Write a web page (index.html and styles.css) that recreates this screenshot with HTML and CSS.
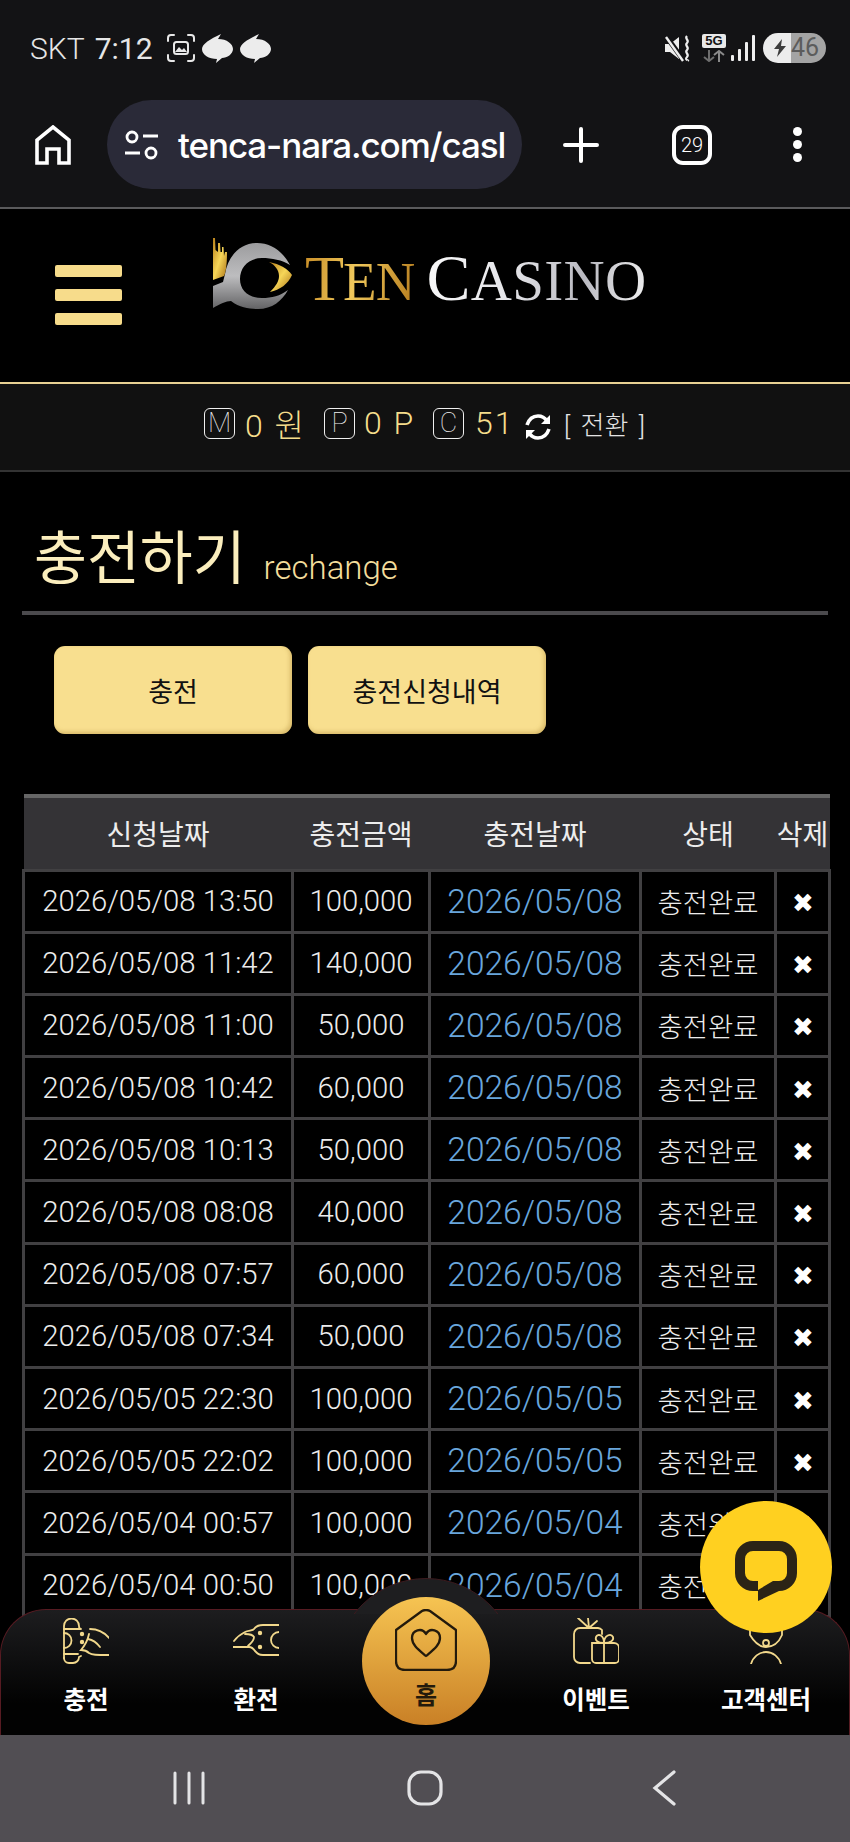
FILE: index.html
```html
<!DOCTYPE html>
<html lang="ko">
<head>
<meta charset="utf-8">
<title>TEN CASINO - 충전하기</title>
<link rel="stylesheet" href="styles.css">
</head>
<body>
<div class="screen">
  <div class="chrome">
    <div class="status">
      <div class="status-left">
        <span class="carrier">SKT</span><span class="clock">7:12</span>
        <svg class="ic-shot" viewBox="0 0 28 28" fill="none" stroke="#e8e8e8" stroke-width="2" stroke-linecap="round"><path d="M1 7V4a3 3 0 0 1 3-3h3M21 1h3a3 3 0 0 1 3 3v3M27 21v3a3 3 0 0 1-3 3h-3M7 27H4a3 3 0 0 1-3-3v-3"/><rect x="7" y="8" width="14" height="12" rx="2.5"/><path d="M8 18l4-5 3 3 2-2 3 4z" fill="#e8e8e8" stroke="none"/></svg>
        <svg class="ic-blob" viewBox="0 0 31 29"><path d="M19 0L16 5C25 5 31 10 31 15C31 20 25 24 20 24L14 29L15 25C7 25 0 21 0 15C0 10 8 5 19 0Z" fill="#ececec"/></svg>
        <svg class="ic-blob" viewBox="0 0 31 29"><path d="M19 0L16 5C25 5 31 10 31 15C31 20 25 24 20 24L14 29L15 25C7 25 0 21 0 15C0 10 8 5 19 0Z" fill="#ececec"/></svg>
      </div>
      <div class="status-right">
        <svg class="ic-mute" viewBox="0 0 27 27"><path d="M0 9h5l9-7v22l-9-7H0z" fill="#eee"/><path d="M1 1l18 25" stroke="#131315" stroke-width="5"/><path d="M1 2l17 24" stroke="#eee" stroke-width="2.4"/><path d="M22 1c-3 3 3 4 0 7s3 4 0 7 3 4 0 7 2 3 1 4" fill="none" stroke="#eee" stroke-width="2.2"/></svg>
        <div class="net"><span class="net-5g">5G</span><svg class="ic-arrows" viewBox="0 0 24 12" fill="none" stroke="#6e6e6e" stroke-width="2"><path d="M7 0v11M2 7l5 4 5-4"/><path d="M17 12V1M12 5l5-4 5 4" stroke="#8a8a8a"/></svg></div>
        <svg class="ic-signal" viewBox="0 0 24 26" fill="#eee"><rect x="0" y="20" width="3" height="6" rx="1"/><rect x="7" y="14" width="3" height="12" rx="1"/><rect x="14" y="7" width="3" height="19" rx="1"/><rect x="21" y="0" width="3" height="26" rx="1"/></svg>
        <div class="battery"><span class="bat-fill"><svg class="ic-bolt" viewBox="0 0 14 18"><path d="M9 0L1 10h5l-2 8 9-11H8z" fill="#3c3c3c"/></svg></span><span class="bat-rest">46</span></div>
      </div>
    </div>
    <div class="browser">
      <svg class="ic-home" viewBox="0 0 36 40" fill="none" stroke="#fff" stroke-width="3.6"><path d="M2 38V15L18 2l16 13v23H24V24H12v14z"/></svg>
      <div class="urlbar">
        <svg class="ic-tune" viewBox="0 0 33 30" fill="none" stroke="#fff" stroke-width="2.8"><circle cx="7" cy="7" r="5"/><path d="M18 6h15M0 23h15"/><circle cx="26" cy="23" r="5"/></svg>
        <span class="url">tenca-nara.com/casl</span>
      </div>
      <svg class="ic-plus" viewBox="0 0 36 36" stroke="#fff" stroke-width="4" stroke-linecap="round"><path d="M18 2v32M2 18h32"/></svg>
      <span class="tabs">29</span>
      <div class="dots"><i></i><i></i><i></i></div>
    </div>
  </div>

  <div class="page">
    <header class="site-head">
      <div class="burger"><i></i><i></i><i></i></div>
      <div class="logo">
        <svg class="logo-mark" viewBox="0 0 82 72">
          <defs>
            <linearGradient id="lgGold" x1="0" y1="0" x2="1" y2="1"><stop offset="0" stop-color="#b8801a"/><stop offset=".5" stop-color="#f6d658"/><stop offset="1" stop-color="#a86f14"/></linearGradient>
            <linearGradient id="lgGray" x1="0" y1="0" x2="0" y2="1"><stop offset="0" stop-color="#9c9c9e"/><stop offset=".5" stop-color="#bdbdbf"/><stop offset="1" stop-color="#636365"/></linearGradient>
          </defs>
          <path d="M78 27C70 12 58 5 45 5C28 5 16 18 13 36L11 44L1 48L1 70C8 66 14 63 19 63C28 70 38 71 46 71C60 71 70 63 76 52C68 58 60 60 50 60C36 60 28 52 28 41C28 29 37 20 50 20C60 20 70 22 78 27Z" fill="url(#lgGray)"/>
          <path d="M1 42L1 0L3 0L3.5 12L6 14L6 5L8 5L8.5 14L10 14L10 9L11.500 9L12 18L13 14L15 14C15 26 14 34 12 38Z" fill="url(#lgGold)"/>
          <path d="M57 24C68 26 76 31 80 37C76 46 68 52 58 54C64 48 67 43 67 38C67 32 63 27 57 24Z" fill="url(#lgGold)"/>
        </svg>
        <div class="logo-text"><span class="word-gold"><span class="cap">T</span>EN</span><span class="word-silver"><span class="cap">C</span>ASINO</span></div>
      </div>
    </header>

    <div class="wallet">
      <span class="badge">M</span><span class="amt amt-m">0 원</span>
      <span class="badge">P</span><span class="amt amt-p">0 P</span>
      <span class="badge">C</span><span class="amt amt-c">51</span>
      <svg class="ic-refresh" viewBox="0 0 28 26" fill="none" stroke="#fff" stroke-width="3.6"><path d="M3 11C5 5 9 2 14 2c4 0 7 2 9 5"/><path d="M25 15c-2 6-6 9-11 9-4 0-7-2-9-5"/><path d="M26 1v9h-9z" fill="#fff" stroke="none"/><path d="M2 25v-9h9z" fill="#fff" stroke="none"/></svg>
      <span class="swap">[ 전환 ]</span>
    </div>

    <main class="content">
      <div class="title-row">
        <h1 class="title">충전하기</h1><span class="subtitle">rechange</span>
      </div>
      <div class="tab-btns">
        <button class="tab-btn">충전</button>
        <button class="tab-btn">충전신청내역</button>
      </div>
      <table class="history">
        <colgroup><col class="c1"><col class="c2"><col class="c3"><col class="c4"><col class="c5"></colgroup>
        <thead>
          <tr><th>신청날짜</th><th>충전금액</th><th>충전날짜</th><th>상태</th><th>삭제</th></tr>
        </thead>
        <tbody>
          <tr><td>2026/05/08 13:50</td><td>100,000</td><td class="link">2026/05/08</td><td class="state">충전완료</td><td class="del">✖</td></tr>
          <tr><td>2026/05/08 11:42</td><td>140,000</td><td class="link">2026/05/08</td><td class="state">충전완료</td><td class="del">✖</td></tr>
          <tr><td>2026/05/08 11:00</td><td>50,000</td><td class="link">2026/05/08</td><td class="state">충전완료</td><td class="del">✖</td></tr>
          <tr><td>2026/05/08 10:42</td><td>60,000</td><td class="link">2026/05/08</td><td class="state">충전완료</td><td class="del">✖</td></tr>
          <tr><td>2026/05/08 10:13</td><td>50,000</td><td class="link">2026/05/08</td><td class="state">충전완료</td><td class="del">✖</td></tr>
          <tr><td>2026/05/08 08:08</td><td>40,000</td><td class="link">2026/05/08</td><td class="state">충전완료</td><td class="del">✖</td></tr>
          <tr><td>2026/05/08 07:57</td><td>60,000</td><td class="link">2026/05/08</td><td class="state">충전완료</td><td class="del">✖</td></tr>
          <tr><td>2026/05/08 07:34</td><td>50,000</td><td class="link">2026/05/08</td><td class="state">충전완료</td><td class="del">✖</td></tr>
          <tr><td>2026/05/05 22:30</td><td>100,000</td><td class="link">2026/05/05</td><td class="state">충전완료</td><td class="del">✖</td></tr>
          <tr><td>2026/05/05 22:02</td><td>100,000</td><td class="link">2026/05/05</td><td class="state">충전완료</td><td class="del">✖</td></tr>
          <tr><td>2026/05/04 00:57</td><td>100,000</td><td class="link">2026/05/04</td><td class="state">충전완료</td><td class="del">✖</td></tr>
          <tr><td>2026/05/04 00:50</td><td>100,000</td><td class="link">2026/05/04</td><td class="state">충전완료</td><td class="del">✖</td></tr>
        </tbody>
      </table>
    </main>

    <nav class="dock">
      <a class="dock-item">
        <svg class="dock-ic" viewBox="0 0 46 46" fill="none" stroke="#f2d88c" stroke-width="1.8" stroke-linecap="round"><path d="M1 40V8a7.500 7.500 0 0 1 15 0c0 2 1 3 2 3"/><path d="M1 40a5 5 0 0 0 5 5h4a6 6 0 0 0 6-6l2-1"/><path d="M1 15a7.500 7.500 0 0 1 0 15"/><path d="M1 11h16M1 36h14"/><path d="M27 11c8 0 14 3 19 9"/><path d="M26 16c-1 5-3 10-8 16 3 0 6 1 8 3 3 2 7 2 20 2"/><path d="M25 21c5 1 9 4 12 8"/><circle cx="19" cy="16" r="1.300" fill="#f2d88c"/><circle cx="19" cy="24" r="1.300" fill="#f2d88c"/></svg>
        <span>충전</span>
      </a>
      <a class="dock-item">
        <svg class="dock-ic" viewBox="0 0 46 46" fill="none" stroke="#f2d88c" stroke-width="1.8" stroke-linecap="round"><path d="M46 7H30c-5 0-7 1-9 4-1 2-6 1-9 3-4 2-8 5-11 9"/><path d="M46 37H30c-4 0-5-1-8-4-2-3-3-4-6-4H0"/><path d="M12 16c5 0 8 1 9 3 0 4-3 6-6 9"/><path d="M46 14a8 8 0 0 0 0 16"/><circle cx="27" cy="15" r="1.300" fill="#f2d88c"/><circle cx="27" cy="29" r="1.300" fill="#f2d88c"/></svg>
        <span>환전</span>
      </a>
      <a class="dock-home">
        <svg class="home-ic" viewBox="0 0 62 62" fill="none" stroke="#231a0c" stroke-width="2.300" stroke-linejoin="round"><path d="M1 21L27 2q4-2 8 0l26 19v31q0 9-9 9H10q-9 0-9-9z"/><path d="M31 47C24 41 17 36 17 29c0-8 10-11 14-4 4-7 14-4 14 4 0 7-7 12-14 18z"/></svg>
        <span>홈</span>
      </a>
      <a class="dock-item">
        <svg class="dock-ic" viewBox="0 0 46 46" fill="none" stroke="#f2d88c" stroke-width="1.800" stroke-linecap="round"><path d="M17 45H7a6 6 0 0 1-6-6V16a6 6 0 0 1 6-6h18a6 6 0 0 1 4 2v4"/><path d="M16 10L5 0M16 10L15 0M16 10L24 3"/><path d="M19 25h22a5 5 0 0 1 5 5v11a4 4 0 0 1-4 4H23a4 4 0 0 1-4-4z"/><path d="M31 25v20"/><path d="M31 25c-7 0-9-3-8-6 2-4 8-2 8 6 0-8 7-10 9-6 1 3-2 6-9 6z"/></svg>
        <span>이벤트</span>
      </a>
      <a class="dock-item">
        <svg class="dock-ic" viewBox="0 0 46 46" fill="none" stroke="#f2d88c" stroke-width="1.800" stroke-linecap="round"><path d="M7 7v10c3 5 9 12 16 12 8 0 13-5 16-12V7"/><circle cx="23" cy="25" r="3"/><path d="M8 46c2-7 8-12 15-12s13 5 15 12"/></svg>
        <span>고객센터</span>
      </a>
    </nav>

    <a class="talk">
      <svg class="talk-ic" viewBox="0 0 62 60"><path d="M18 0h26a18 18 0 0 1 18 18v14a18 18 0 0 1-18 18H44L23 60V50H18A18 18 0 0 1 0 32V18A18 18 0 0 1 18 0z" fill="#2b2416"/><path d="M18 10h26a8 8 0 0 1 8 8v14a8 8 0 0 1-8 8h-6l-15 9V40H18a8 8 0 0 1-8-8V18a8 8 0 0 1 8-8z" fill="#ffd020"/></svg>
    </a>
  </div>

  <div class="sysnav">
    <svg class="ic-recents" viewBox="0 0 34 34" stroke="#e4e4e6" stroke-width="3" stroke-linecap="round"><path d="M3 2v30M17 2v30M31 2v30"/></svg>
    <svg class="ic-circle" viewBox="0 0 36 36" fill="none" stroke="#e4e4e6" stroke-width="3.200"><rect x="2" y="2" width="32" height="32" rx="12"/></svg>
    <svg class="ic-back" viewBox="0 0 24 36" fill="none" stroke="#e4e4e6" stroke-width="3.200" stroke-linecap="round"><path d="M22 2L3 18l19 16"/></svg>
  </div>
</div>
</body>
</html>
```
FILE: styles.css
```css
* { box-sizing: border-box; }
html, body { margin: 0; padding: 0; background: #000; }
body { font-family: Roboto, "Noto Sans CJK KR", sans-serif; }
svg { display: block; flex: none; }

.screen { width: 850px; height: 1842px; display: flex; flex-direction: column; overflow: hidden; }

/* phone + browser chrome */
.chrome { height: 209px; flex: none; background: #131315; border-bottom: 2px solid #5a5a5c; }
.status { height: 100px; padding: 0 24px 4px 30px; display: flex; align-items: center; justify-content: space-between; }
.status-left, .status-right { display: flex; align-items: center; }
.carrier, .clock { font-size: 30px; font-weight: 300; color: #e6e6e6; }
.clock { margin-left: 10px; font-weight: 400; }
.ic-shot { width: 28px; height: 28px; margin-left: 14px; }
.ic-blob { width: 31px; height: 29px; margin-left: 7px; }
.ic-mute { width: 27px; height: 27px; }
.net { width: 24px; margin-left: 10px; }
.net-5g { display: block; height: 14px; background: #e8e8e8; color: #131315; border-radius: 2px; font: 700 13px/14px "Liberation Sans", sans-serif; text-align: center; }
.ic-arrows { width: 24px; height: 12px; margin-top: 2px; }
.ic-signal { width: 24px; height: 26px; margin-left: 5px; }
.battery { width: 63px; height: 30px; margin-left: 8px; border-radius: 15px; overflow: hidden; display: flex; }
.bat-fill { width: 28px; background: #ececec; display: flex; align-items: center; justify-content: flex-end; padding-right: 4px; }
.ic-bolt { width: 14px; height: 18px; }
.bat-rest { flex: 1; background: #a4a4a4; color: #5c5c5c; font-size: 25px; line-height: 30px; font-weight: 400; }

.browser { height: 89px; padding-left: 35px; display: flex; align-items: center; }
.ic-home { width: 36px; height: 40px; }
.urlbar { width: 415px; height: 89px; margin: 0 41px 0 36px; padding-left: 18px; border-radius: 45px; background: #2a2a38; display: flex; align-items: center; }
.ic-tune { width: 33px; height: 30px; }
.url { width: 330px; margin-left: 20px; white-space: nowrap; color: #fff; font: 500 35px/44px Inter, Roboto, sans-serif; letter-spacing: -1.1px; }
.ic-plus { width: 36px; height: 36px; }
.tabs { width: 40px; height: 40px; margin-left: 73px; border: 4px solid #fff; border-radius: 11px; color: #fff; font-size: 20px; font-weight: 300; line-height: 32px; text-align: center; }
.dots { margin-left: 81px; display: flex; flex-direction: column; gap: 4px; }
.dots i { display: block; width: 9px; height: 9px; border-radius: 50%; background: #fff; }

/* page */
.page { position: relative; flex: 1; min-height: 0; overflow: hidden; background: #000; }

.site-head { height: 175px; padding: 29px 0 0 55px; display: flex; align-items: flex-start; border-bottom: 2px solid #e8d193; }
.burger { width: 67px; margin-top: 27px; display: flex; flex-direction: column; gap: 12px; }
.burger i { display: block; height: 12px; border-radius: 2px; background: #f7dc8b; }
.logo { margin-left: 90px; display: flex; align-items: flex-start; }
.logo-mark { width: 82px; height: 72px; }
.logo-text { margin: 0 0 0 11px; display: flex; align-items: baseline; gap: 12px; font: 400 57px/80px "Liberation Serif", serif; white-space: nowrap; }
.cap { font-size: 66px; }
.word-gold { background: linear-gradient(100deg, #c88d26, #f0c85c 45%, #b47a1c); -webkit-background-clip: text; background-clip: text; color: transparent; font-size: 55px; letter-spacing: -1px; }
.word-gold .cap { font-size: 64px; }
.word-silver { background: linear-gradient(100deg, #fafafa, #e4e4e8 40%, #b9b9c0 70%, #f2f2f2); -webkit-background-clip: text; background-clip: text; color: transparent; letter-spacing: .3px; }

.wallet { height: 88px; padding: 0 0 8px 204px; display: flex; align-items: center; background: #111; border-bottom: 2px solid #333; }
.badge { width: 31px; height: 31px; border: 1px solid #f0f0f0; border-radius: 6px; color: #f0f0f0; font-size: 27px; font-weight: 100; line-height: 29px; text-align: center; }
.amt { margin-left: 10px; color: #f5dd8c; font-size: 32px; font-weight: 300; letter-spacing: 2px; white-space: nowrap; }
.amt-m { width: 79px; }
.amt-p { width: 69px; margin-left: 9px; }
.amt-c { width: 42px; margin-left: 11px; }
.ic-refresh { width: 28px; height: 26px; margin: 8px 0 0 7px; }
.swap { margin-left: 12px; color: #e4e4e4; font-size: 26px; font-weight: 300; white-space: pre; word-spacing: 4px; }

.content { padding: 0 22px; }
.title-row { height: 143px; padding-top: 40px; display: flex; align-items: baseline; gap: 18px; border-bottom: 4px solid #4b4a4d; margin-bottom: 31px; }
.title { margin: 0; padding-left: 12px; color: #fbeebd; font-size: 57.500px; font-weight: 400; }
.subtitle { color: #f3dd9c; font-size: 33px; font-weight: 300; }

.tab-btns { padding-left: 32px; display: flex; gap: 16px; }
.tab-btn { width: 238px; height: 88px; padding: 0; border: 0; border-radius: 11px; background: #f8df8f; box-shadow: inset -2px -2px 4px rgba(170, 130, 50, .4); color: #111; font: 400 27px "Noto Sans CJK KR", sans-serif; }

.history { width: 806px; margin-top: 60px; border-collapse: collapse; table-layout: fixed; }
.c1 { width: 269px; }
.c2 { width: 137px; }
.c3 { width: 211px; }
.c4 { width: 135px; }
.c5 { width: 54px; }
.history th { height: 74px; padding: 0; border-top: 4px solid #666; background: #343336; color: #ededed; font-size: 28px; font-weight: 400; white-space: nowrap; }
.history td { height: 62.200px; padding: 0; border: 3px solid #414042; background: #000; color: #ececec; font-size: 29.300px; font-weight: 300; text-align: center; white-space: nowrap; }
.history td.link { color: #69a6dc; font-size: 33.500px; }
.history td.state { font-size: 27.500px; }
.history td.del { padding-top: 4px; color: #fff; font-family: "DejaVu Sans", sans-serif; font-size: 26px; }

/* fixed bottom dock */
.dock { position: absolute; left: 0; right: 0; bottom: 0; height: 126px; display: grid; grid-template-columns: repeat(5, 170px); justify-items: center; border: 1px solid #571b22; border-bottom: 0; border-radius: 46px 46px 0 0; background: linear-gradient(#1d1d1f, #020202 75%); }
.dock::before { content: ""; position: absolute; left: 334px; top: -32px; width: 180px; height: 180px; border: 1px solid #3c1a1e; border-radius: 50%; background: #1e1e20; clip-path: inset(0 0 146px 0); }
.dock-item { position: relative; padding-top: 8px; display: flex; flex-direction: column; align-items: center; color: #fff; font-size: 24.500px; font-weight: 700; line-height: 36px; white-space: nowrap; }
.dock-ic { width: 46px; height: 46px; margin-bottom: 19px; }
.dock-home { position: relative; width: 128px; height: 128px; margin-top: -13px; padding-top: 12px; display: flex; flex-direction: column; align-items: center; border-radius: 50%; background: linear-gradient(#f6c452, #c98026); color: #231a0c; font-size: 24px; font-weight: 700; line-height: 34px; }
.home-ic { width: 62px; height: 62px; margin-bottom: 8px; }

.talk { position: absolute; right: 18px; bottom: 102px; width: 132px; height: 132px; display: flex; align-items: center; justify-content: center; border-radius: 50%; background: #ffd020; }
.talk-ic { width: 62px; height: 60px; margin-top: 8px; }

/* android nav */
.sysnav { height: 107px; flex: none; display: flex; align-items: center; justify-content: center; gap: 201px; background: #514e53; padding: 0 2px 1px 0; }
.ic-recents { width: 34px; height: 34px; }
.ic-circle { width: 36px; height: 36px; }
.ic-back { width: 24px; height: 36px; margin-left: 8px; }
```
